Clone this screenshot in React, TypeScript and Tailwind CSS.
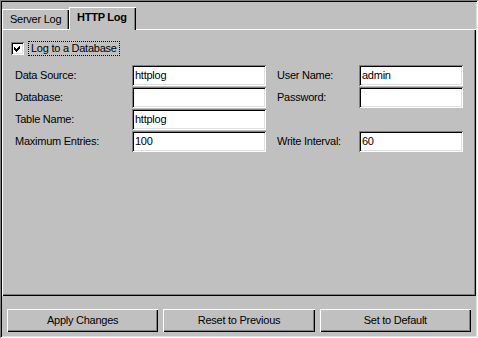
import React from "react";

const sunken =
  "shadow-[inset_1px_1px_#808080,inset_-1px_-1px_#fff,inset_2px_2px_#000,inset_-2px_-2px_#dfdfdf]";
const raised = "shadow-[inset_1px_1px_#fff,inset_-1px_-1px_#000,inset_-2px_-2px_#808080]";

function Field({ value, width }: { value: string; width: string }) {
    return (
        <div className={`${width} h-[21px] bg-white ${sunken} flex items-center px-[3px] text-black`}>
            {value}
        </div>
    );
}

function Row({
    label,
    value,
    right,
}: {
    label: string;
    value: string;
    right?: { label: string; value: string };
}) {
    return (
        <div className="flex items-center h-[21px] mb-[1px]">
            <div className="w-[117px]">{label}</div>
            <Field value={value} width="w-[134px]" />
            {right && (
                <>
                    <div className="w-[82px] ml-[11px]">{right.label}</div>
                    <Field value={right.value} width="w-[104px]" />
                </>
            )}
        </div>
    );
}

export default function App() {
    return (
        <div
            className={`w-[478px] h-[338px] bg-[#c0c0c0] p-[2px] flex flex-col text-[11px] tracking-[-0.25px] text-black ${sunken}`}
            style={{ fontFamily: '"Liberation Sans", Arial, sans-serif' }}
        >
            {/* tab strip */}
            <div className="h-[28px] flex items-end">
                <div className="w-[67px] h-[21px] border-b border-white shadow-[inset_1px_1px_#fff,inset_-1px_0_#000,inset_-2px_0_#808080] flex items-center pl-[8px]">
                    Server Log
                </div>
                <div className="w-[67px] h-[23px] shadow-[inset_1px_1px_#fff,inset_-1px_0_#000,inset_-2px_0_#808080] flex items-center pl-[8px] pb-[2px] font-bold">
                    HTTP Log
                </div>
                <div className="flex-1 h-px bg-white" />
            </div>

            {/* panel */}
            <div className="h-[266px] shadow-[inset_1px_0_#fff,inset_-1px_-1px_#000,inset_-2px_-2px_#808080]">
                <div className="pt-[11px] pl-[9px] flex items-center h-[26px]">
                    <div className={`w-[13px] h-[13px] bg-white ${sunken} flex items-center justify-center`}>
                        <svg width="13" height="13" viewBox="0 0 13 13" shapeRendering="crispEdges">
                            <polygon points="3,5 5,7 9,3 9,6 5,10 3,8" fill="#000" />
                        </svg>
                    </div>
                    <div className="ml-[4px] h-[15px] px-[2px] border border-dotted border-black flex items-center">
                        Log to a Database
                    </div>
                </div>
                <div className="pl-[13px] mt-[9px]">
                    <Row label="Data Source:" value="httplog" right={{ label: "User Name:", value: "admin" }} />
                    <Row label="Database:" value="" right={{ label: "Password:", value: "" }} />
                    <Row label="Table Name:" value="httplog" />
                    <Row label="Maximum Entries:" value="100" right={{ label: "Write Interval:", value: "60" }} />
                </div>
            </div>

            {/* buttons */}
            <div className="mt-[13px] px-[5px] flex gap-[5px]">
                {["Apply Changes", "Reset to Previous", "Set to Default"].map((b) => (
                    <div key={b} className={`flex-1 h-[23px] ${raised} flex items-center justify-center`}>
                        {b}
                    </div>
                ))}
            </div>
        </div>
    );
}
